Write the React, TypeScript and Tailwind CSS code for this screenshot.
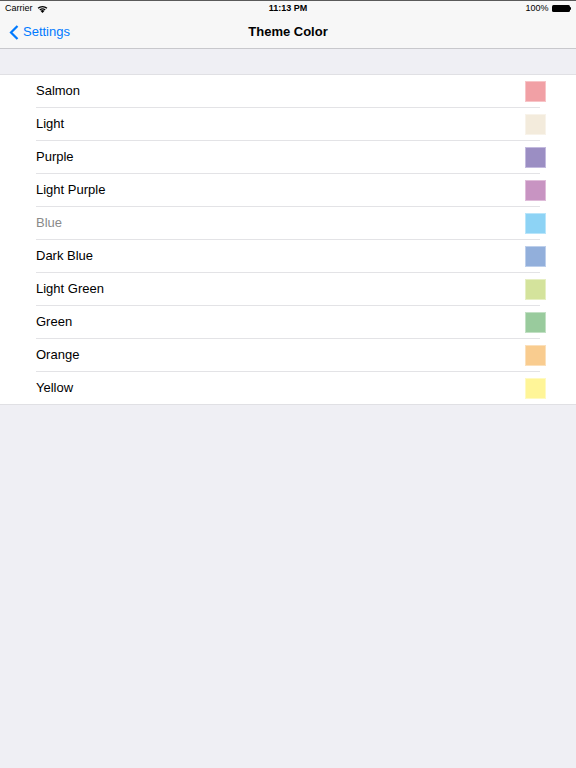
import React from 'react';

const colors = [
  { name: 'Salmon', swatch: 'bg-[#f1a0a5] border-[#f7c4c7]' },
  { name: 'Light', swatch: 'bg-[#f3ebdc] border-[#f8f3ea]' },
  { name: 'Purple', swatch: 'bg-[#9b8ec3] border-[#c3bade]' },
  { name: 'Light Purple', swatch: 'bg-[#c894c2] border-[#dfbcd9]' },
  { name: 'Blue', swatch: 'bg-[#8dd3f5] border-[#b9e5fa]', muted: true },
  { name: 'Dark Blue', swatch: 'bg-[#92afdb] border-[#bdcfeb]' },
  { name: 'Light Green', swatch: 'bg-[#d4e39c] border-[#e6efc3]' },
  { name: 'Green', swatch: 'bg-[#99cb9d] border-[#c2e0c4]' },
  { name: 'Orange', swatch: 'bg-[#f9cc8f] border-[#fbe0bb]' },
  { name: 'Yellow', swatch: 'bg-[#fff598] border-[#fffac2]' },
];

const font = { fontFamily: '"Liberation Sans", Arial, sans-serif' };

function StatusBar() {
  return (
    <div className="relative flex h-[16px] items-center justify-between border-t border-[#5a5a5a] px-[5px] text-[9px] text-black">
      <div className="flex items-center gap-[4px]">
        <span>Carrier</span>
        <svg width="11" height="8" viewBox="0 0 11 8">
          <path d="M5.5 8 L3.6 5.9 A2.8 2.8 0 0 1 7.4 5.9 Z" fill="#000" />
          <path d="M2.4 4.6 A4.6 4.6 0 0 1 8.6 4.6 L7.8 5.4 A3.5 3.5 0 0 0 3.2 5.4 Z" fill="#000" />
          <path d="M0.6 2.8 A7.2 7.2 0 0 1 10.4 2.8 L9.5 3.7 A6 6 0 0 0 1.5 3.7 Z" fill="#000" />
        </svg>
      </div>
      <span className="absolute left-1/2 -translate-x-1/2 font-bold">11:13 PM</span>
      <div className="flex items-center gap-[3px]">
        <span>100%</span>
        <div className="flex items-center">
          <div className="h-[7px] w-[18px] rounded-[1.5px] bg-black" />
          <div className="h-[3px] w-[1.5px] rounded-r-[1px] bg-black" />
        </div>
      </div>
    </div>
  );
}

function NavBar() {
  return (
    <div className="relative flex h-[33px] items-center border-b border-[#c8c8cc]">
      <div className="flex items-center gap-[4px] pl-[9px] text-[13px] text-[#007aff]">
        <svg width="10" height="15" viewBox="0 0 10 15">
          <path d="M8.5 1 L2 7.5 L8.5 14" fill="none" stroke="#007aff" strokeWidth="2.2" />
        </svg>
        <span>Settings</span>
      </div>
      <span className="absolute left-1/2 -translate-x-1/2 text-[13px] font-bold text-black">
        Theme Color
      </span>
    </div>
  );
}

export default function App() {
  return (
    <div className="flex min-h-[768px] flex-col bg-[#efeff4]" style={font}>
      <div className="bg-[#f7f7f7]">
        <StatusBar />
        <NavBar />
      </div>
      <div className="h-[25px]" />
      <div className="border-y border-[#e0e0e4] bg-white">
        {colors.map((c, i) => (
          <div key={c.name} className="px-[30px] pl-[36px]">
            <div className="flex h-[32px] items-center justify-between">
              <span className={`text-[13px] ${c.muted ? 'text-[#8a8a8a]' : 'text-black'}`}>
                {c.name}
              </span>
              <div className={`h-[21px] w-[21px] border ${c.swatch}`} />
            </div>
            {i < colors.length - 1 && <div className="mr-[6px] h-px bg-[#e3e3e6]" />}
          </div>
        ))}
      </div>
    </div>
  );
}
